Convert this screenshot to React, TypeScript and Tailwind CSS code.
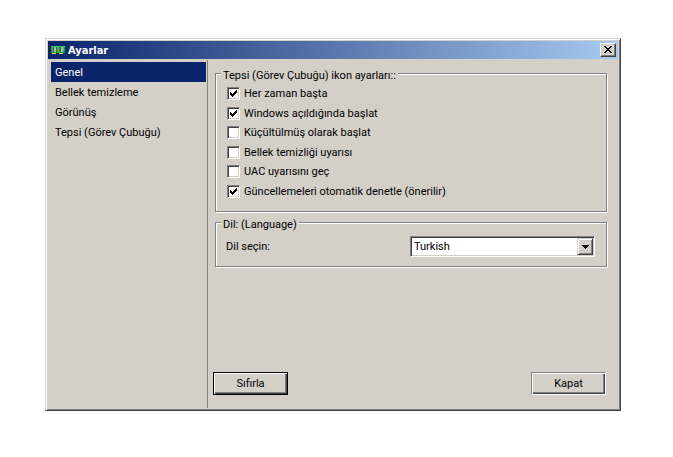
import { useState } from "react";

const pages = ["Genel", "Bellek temizleme", "Görünüş", "Tepsi (Görev Çubuğu)"];

const options = [
  { id: "top", label: "Her zaman başta", on: true },
  { id: "startup", label: "Windows açıldığında başlat", on: true },
  { id: "minimized", label: "Küçültülmüş olarak başlat", on: false },
  { id: "warning", label: "Bellek temizliği uyarısı", on: false },
  { id: "uac", label: "UAC uyarısını geç", on: false },
  { id: "update", label: "Güncellemeleri otomatik denetle (önerilir)", on: true },
];

const groupClass =
  "min-w-0 border border-[#808080] shadow-[1px_1px_0_#fff,inset_1px_1px_0_#fff]";
const legendClass = "ml-[5px] bg-[#d4d0c8] px-[2px] pt-1";

function MemoryIcon() {
  return (
    <svg width="14" height="10" viewBox="0 0 14 10" shapeRendering="crispEdges" aria-hidden="true">
      <path fill="#0f9a38" d="M0 1h14v7H0z" />
      <path fill="#2fc750" d="M0 1h14v1H0zM1 2h1v5H1zM6 2h2v5H6zM12 2h1v5h-1z" />
      <path fill="#4d5a52" d="M2 2h1v5H2zM5 2h1v5H5zM9 2h1v5H9z" />
      <path fill="#b9aeb0" d="M3 2h2v5H3zM10 2h2v5h-2z" />
      <path fill="#f2e33a" d="M1 8h4v1H1zM8 8h4v1H8z" />
    </svg>
  );
}

function Option({ id, label, on }: { id: string; label: string; on: boolean }) {
  return (
    <div className="flex h-[13px] items-center gap-1">
      <span className="grid h-[13px] w-[13px]">
        <input
          id={id}
          type="checkbox"
          defaultChecked={on}
          className="peer col-start-1 row-start-1 h-[13px] w-[13px] appearance-none border border-t-[#808080] border-r-white border-b-white border-l-[#808080] bg-white shadow-[inset_1px_1px_0_#404040,inset_-1px_-1px_0_#d4d0c8]"
        />
        <svg
          className="pointer-events-none invisible col-start-1 row-start-1 peer-checked:visible"
          width="13"
          height="13"
          viewBox="0 0 13 13"
          shapeRendering="crispEdges"
          aria-hidden="true"
        >
          <path d="M3 5h1v3H3zM4 6h1v3H4zM5 7h1v3H5zM6 6h1v3H6zM7 5h1v3H7zM8 4h1v3H8zM9 3h1v3H9z" />
        </svg>
      </span>
      <label htmlFor={id} className="whitespace-nowrap">
        {label}
      </label>
    </div>
  );
}

export default function App() {
  const [page, setPage] = useState(pages[0]);
  return (
    <main className="flex min-h-screen bg-white pt-[38px] pr-[52px] pb-[46px] pl-[45px] font-['Roboto','DejaVu_Sans_Condensed',sans-serif] text-[11px] leading-[13px] text-black">
      <section className="flex min-w-0 flex-1 flex-col border border-t-[#d4d0c8] border-r-[#404040] border-b-[#404040] border-l-[#d4d0c8] bg-[#d4d0c8] p-[2px] shadow-[inset_1px_1px_0_#fff,inset_-1px_-1px_0_#808080]">
        <header className="flex h-[18px] shrink-0 items-center gap-[3px] bg-linear-to-r/srgb from-[#0a246a] to-[#a6caf0] pr-[2px] pl-[3px]">
          <MemoryIcon />
          <h1 className="flex-1 font-['DejaVu_Sans_Condensed',sans-serif] font-bold text-white">
            Ayarlar
          </h1>
          <button
            type="button"
            aria-label="Kapat"
            className="flex h-[14px] w-4 items-center justify-center border border-t-white border-r-[#404040] border-b-[#404040] border-l-white bg-[#d4d0c8] shadow-[inset_-1px_-1px_0_#808080]"
          >
            <svg width="8" height="8" viewBox="0 0 8 8" shapeRendering="crispEdges" aria-hidden="true">
              <path d="M0 0h2v1H0zM6 0h2v1H6zM1 1h2v1H1zM5 1h2v1H5zM2 2h4v1H2zM3 3h2v1H3zM2 4h4v1H2zM1 5h2v1H1zM5 5h2v1H5zM0 6h2v1H0zM6 6h2v1H6z" />
            </svg>
          </button>
        </header>
        <div className="flex flex-1 pt-px">
          <nav className="w-[160px] shrink-0 border-r border-[#808080] pt-[2px] pr-px pl-[3px]">
            {pages.map((name) => (
              <button
                key={name}
                type="button"
                onClick={() => setPage(name)}
                className={
                  name === page
                    ? "block h-5 w-full bg-[#0a246a] pl-1 text-left text-white"
                    : "block h-5 w-full pl-1 text-left"
                }
              >
                {name}
              </button>
            ))}
          </nav>
          <div className="flex min-w-0 flex-1 flex-col pt-[5px] pr-[11px] pb-[13px] pl-[7px]">
            <fieldset className={groupClass}>
              <legend className={legendClass}>Tepsi (Görev Çubuğu) ikon ayarları::</legend>
              <div className="mt-[5px] mb-[13px] flex h-[111px] flex-col justify-between pl-[11px]">
                {options.map((o) => (
                  <Option key={o.id} {...o} />
                ))}
              </div>
            </fieldset>
            <fieldset className={groupClass + " mt-[2px]"}>
              <legend className={legendClass}>Dil: (Language)</legend>
              <div className="mt-[5px] mb-[9px] flex items-center justify-between pr-[11px] pl-[10px]">
                <label htmlFor="language">Dil seçin:</label>
                <div className="relative w-[185px]">
                  <select
                    id="language"
                    className="block h-[21px] w-full appearance-none border border-t-[#808080] border-r-white border-b-white border-l-[#808080] bg-white pl-[3px] shadow-[inset_1px_1px_0_#404040,inset_-1px_-1px_0_#d4d0c8]"
                  >
                    <option>Turkish</option>
                  </select>
                  <span className="pointer-events-none absolute top-[2px] right-[2px] flex h-[17px] w-4 items-center justify-center border border-t-[#d4d0c8] border-r-[#404040] border-b-[#404040] border-l-[#d4d0c8] bg-[#d4d0c8] shadow-[inset_1px_1px_0_#fff,inset_-1px_-1px_0_#808080]">
                    <svg width="7" height="4" viewBox="0 0 7 4" shapeRendering="crispEdges" aria-hidden="true">
                      <path d="M0 0h7v1H0zM1 1h5v1H1zM2 2h3v1H2zM3 3h1v1H3z" />
                    </svg>
                  </span>
                </div>
              </div>
            </fieldset>
            <div className="mt-auto mr-px -ml-[2px] flex justify-between">
              <button
                type="button"
                className="h-[23px] w-[75px] border border-black shadow-[inset_1px_1px_0_#fff,inset_-1px_-1px_0_#404040,inset_-2px_-2px_0_#808080]"
              >
                Sıfırla
              </button>
              <button
                type="button"
                className="h-[23px] w-[75px] border border-t-[#808080] border-r-white border-b-white border-l-[#808080] shadow-[inset_1px_1px_0_#fff,inset_-1px_-1px_0_#404040,inset_-2px_-2px_0_#808080]"
              >
                Kapat
              </button>
            </div>
          </div>
        </div>
      </section>
    </main>
  );
}
